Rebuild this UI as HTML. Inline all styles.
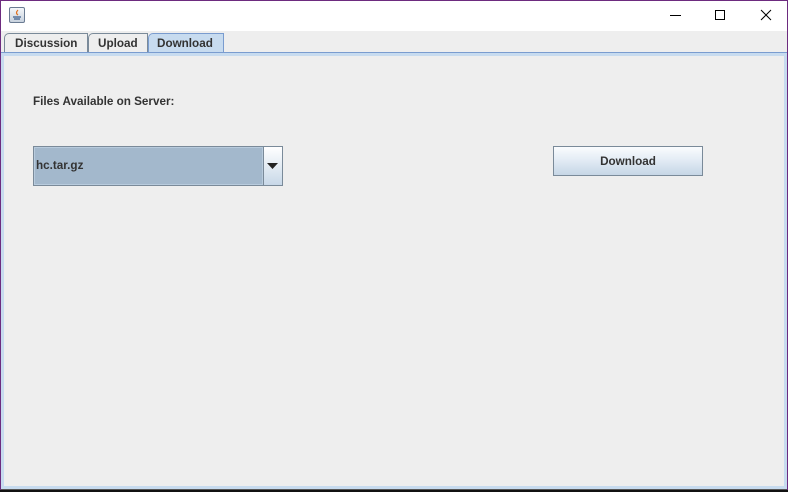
<!DOCTYPE html>
<html><head><style>
*{margin:0;padding:0;box-sizing:border-box}
body{width:788px;height:492px;overflow:hidden;background:#eeeeee;font-family:"Liberation Sans",Arial,sans-serif;font-size:11.7px;font-weight:bold;color:#333;position:relative}
.abs{position:absolute}
</style></head><body>
<div class="abs" style="left:0;top:0;width:788px;height:1px;background:#6d2b7f"></div>
<div class="abs" style="left:0;top:0;width:1px;height:492px;background:#6d2b7f"></div>
<div class="abs" style="left:787px;top:0;width:1px;height:492px;background:#6d2b7f"></div>
<div class="abs" style="left:1px;top:1px;width:786px;height:30px;background:#fff"></div>
<div class="abs" style="left:9px;top:7px;width:16px;height:16px;border:1px solid #6a7b92;border-radius:2px;background:linear-gradient(#f4f6f9,#c8d2de)"></div>
<svg class="abs" style="left:9px;top:7px" width="16" height="16"><path d="M9 3 Q6 6 9 8" stroke="#e07020" fill="none" stroke-width="1.2"/><path d="M4 10 H12 M5 12 H11" stroke="#3b5b8a" stroke-width="1.2"/></svg>
<div class="abs" style="left:670px;top:15px;width:11px;height:1px;background:#000"></div>
<div class="abs" style="left:715px;top:10px;width:10px;height:10px;border:1px solid #000"></div>
<svg class="abs" style="left:760px;top:9px" width="12" height="12"><path d="M1 1 L11 11 M11 1 L1 11" stroke="#000" stroke-width="1"/></svg>
<div class="abs" style="left:4px;top:33px;width:84px;height:21px;border:1px solid #7a8a99;border-bottom:none;border-top-left-radius:5px;background:#eeeeee;padding:3px 0 0 10px">Discussion</div>
<div class="abs" style="left:88px;top:33px;width:60px;height:21px;border:1px solid #7a8a99;border-bottom:none;border-top-left-radius:5px;background:#eeeeee;padding:3px 0 0 9px">Upload</div>
<div class="abs" style="left:148px;top:33px;width:76px;height:21px;border:1px solid #7a9ccf;border-bottom:none;border-top-left-radius:5px;background:#c7dbef;padding:3px 0 0 8px">Download</div>
<div class="abs" style="left:1px;top:52px;width:786px;height:1px;background:#7a9ccf"></div>
<div class="abs" style="left:1px;top:53px;width:786px;height:436px;border:3px solid #c7dbef;background:#eeeeee"></div>
<div class="abs" style="left:1px;top:489px;width:786px;height:1px;background:#555"></div>
<div class="abs" style="left:0;top:490px;width:788px;height:2px;background:#111"></div>
<div class="abs" style="left:33px;top:95px">Files Available on Server:</div>
<div class="abs" style="left:33px;top:146px;width:250px;height:40px;border:1px solid #7a8a99;background:#a3b8cc"></div>
<div class="abs" style="left:34px;top:147px;width:229px;height:38px;border:1px solid #b8cbdd"></div>
<div class="abs" style="left:36px;top:159px">hc.tar.gz</div>
<div class="abs" style="left:263px;top:147px;width:19px;height:38px;border-left:1px solid #7a8a99;background:linear-gradient(#fff,#c8d8e8)"></div>
<svg class="abs" style="left:267px;top:163px" width="12" height="7"><path d="M0 0 H11 L5.5 6 Z" fill="#222"/></svg>
<div class="abs" style="left:553px;top:146px;width:150px;height:30px;border:1px solid #7a8a99;background:linear-gradient(#fafcfe,#e6eef6 40%,#c6d6e6);text-align:center;line-height:29px">Download</div>
</body></html>
